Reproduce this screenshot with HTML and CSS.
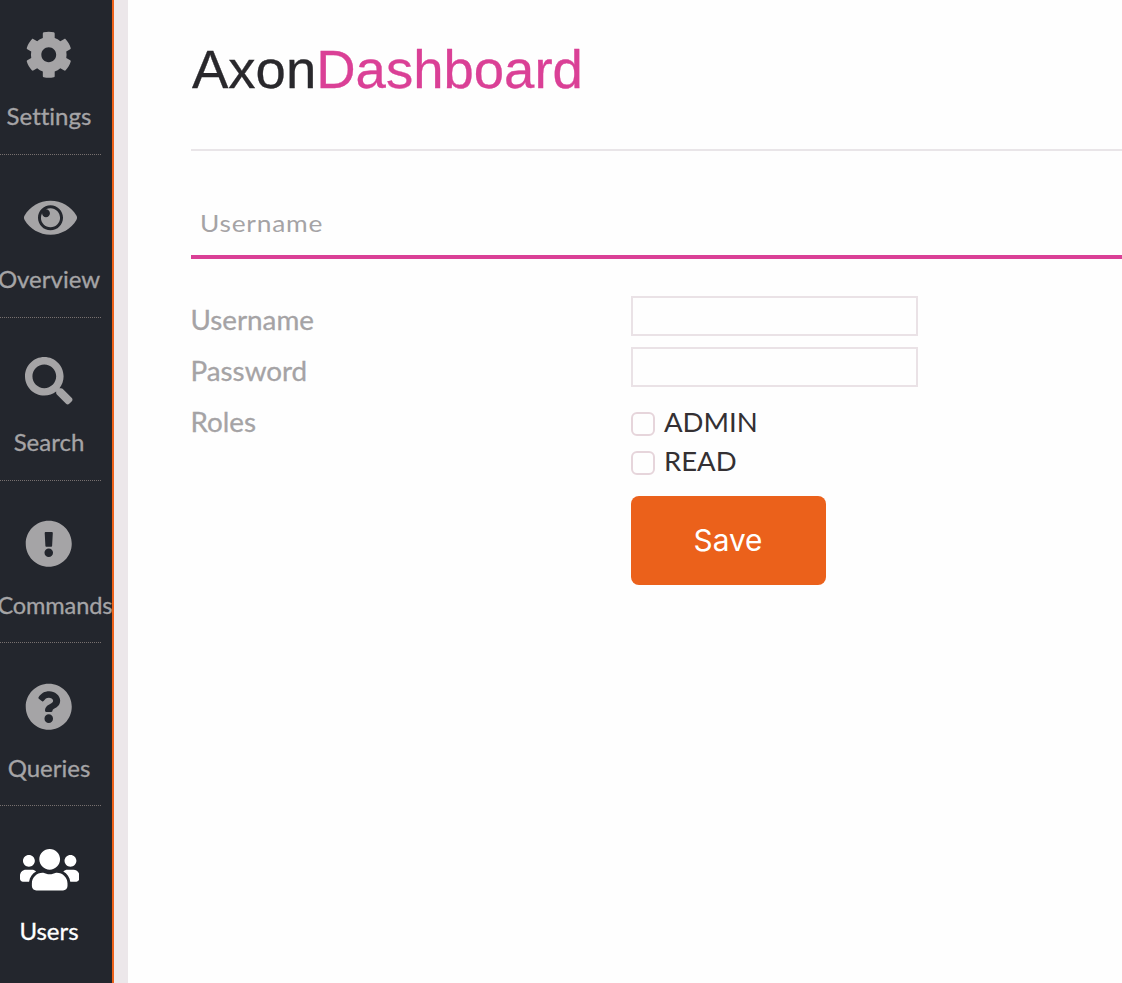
FILE: index.html
```html
<!DOCTYPE html>
<html lang="en">
<head>
<meta charset="utf-8">
<title>AxonDashboard</title>
<link rel="stylesheet" href="styles.css">
</head>
<body>
<div class="app">
  <nav class="sidebar">
    <a class="item">
      <svg class="icon" viewBox="0 0 512 512"><path d="M487.4 315.7l-42.6-24.6c4.3-23.2 4.3-47 0-70.2l42.6-24.6c4.9-2.8 7.1-8.6 5.5-14-11.1-35.6-30-67.8-54.7-94.6-3.8-4.1-10-5.1-14.8-2.3L380.8 110c-17.9-15.4-38.5-27.3-60.8-35.1V25.8c0-5.6-3.9-10.5-9.4-11.7-36.7-8.2-74.3-7.8-109.2 0-5.5 1.2-9.4 6.1-9.4 11.7V75c-22.2 7.9-42.8 19.8-60.8 35.1L88.7 85.5c-4.9-2.8-11-1.9-14.8 2.3-24.7 26.7-43.6 58.9-54.7 94.6-1.7 5.4.6 11.2 5.5 14L67.3 221c-4.3 23.2-4.3 47 0 70.2l-42.6 24.6c-4.9 2.8-7.1 8.6-5.5 14 11.1 35.6 30 67.8 54.7 94.6 3.8 4.1 10 5.1 14.8 2.3l42.6-24.6c17.9 15.4 38.5 27.3 60.8 35.1v49.2c0 5.6 3.9 10.5 9.4 11.7 36.7 8.2 74.3 7.8 109.2 0 5.5-1.2 9.4-6.1 9.4-11.7v-49.2c22.2-7.9 42.8-19.8 60.8-35.1l42.6 24.6c4.9 2.8 11 1.9 14.8-2.3 24.7-26.7 43.6-58.9 54.7-94.6 1.5-5.5-.7-11.3-5.6-14.1zM256 336c-44.1 0-80-35.9-80-80s35.9-80 80-80 80 35.9 80 80-35.9 80-80 80z"/></svg>
      <span class="label">Settings</span>
    </a>
    <a class="item">
      <svg class="icon" viewBox="0 0 576 512"><path d="M569.354 231.631C512.969 135.949 407.81 72 288 72 168.14 72 63.004 135.994 6.646 231.631a47.999 47.999 0 0 0 0 48.739C63.031 376.051 168.19 440 288 440c119.86 0 224.996-63.994 281.354-159.631a47.997 47.997 0 0 0 0-48.738zM288 392c-75.162 0-136-60.827-136-136 0-75.162 60.826-136 136-136 75.162 0 136 60.826 136 136 0 75.162-60.826 136-136 136zm104-136c0 57.438-46.562 104-104 104s-104-46.562-104-104c0-17.708 4.431-34.379 12.236-48.973l-.001.032c0 23.651 19.173 42.823 42.824 42.823s42.824-19.173 42.824-42.823c0-23.651-19.173-42.824-42.824-42.824l-.032.001C253.621 156.431 270.292 152 288 152c57.438 0 104 46.562 104 104z"/></svg>
      <span class="label">Overview</span>
    </a>
    <a class="item">
      <svg class="icon" viewBox="0 0 512 512"><path d="M505 442.7L405.3 343c-4.5-4.5-10.6-7-17-7H372c27.6-35.3 44-79.7 44-128C416 93.1 322.9 0 208 0S0 93.1 0 208s93.1 208 208 208c48.3 0 92.7-16.4 128-44v16.300c0 6.400 2.500 12.500 7 17l99.700 99.700c9.400 9.400 24.600 9.400 33.900 0l28.300-28.300c9.400-9.400 9.400-24.600.100-34zM208 336c-70.700 0-128-57.200-128-128 0-70.700 57.200-128 128-128 70.700 0 128 57.200 128 128 0 70.700-57.200 128-128 128z"/></svg>
      <span class="label">Search</span>
    </a>
    <a class="item">
      <svg class="icon" viewBox="0 0 512 512"><path d="M504 256c0 136.997-111.043 248-248 248S8 392.997 8 256C8 119.083 119.043 8 256 8s248 111.083 248 248zm-248 50c-25.405 0-46 20.595-46 46s20.595 46 46 46 46-20.595 46-46-20.595-46-46-46zm-43.673-165.346l7.418 136c.347 6.364 5.609 11.346 11.982 11.346h48.546c6.373 0 11.635-4.982 11.982-11.346l7.418-136c.375-6.874-5.098-12.654-11.982-12.654h-63.383c-6.884 0-12.356 5.780-11.981 12.654z"/></svg>
      <span class="label">Commands</span>
    </a>
    <a class="item">
      <svg class="icon" viewBox="0 0 512 512"><path d="M504 256c0 136.997-111.043 248-248 248S8 392.997 8 256C8 119.083 119.043 8 256 8s248 111.083 248 248zM262.655 90c-54.497 0-89.255 22.957-116.549 63.758-3.536 5.286-2.353 12.415 2.715 16.258l34.699 26.310c5.205 3.947 12.621 3.008 16.665-2.122 17.864-22.658 30.113-35.797 57.303-35.797 20.429 0 45.698 13.148 45.698 32.958 0 14.976-12.363 22.667-32.534 33.976C247.128 238.528 216 254.941 216 296v4c0 6.627 5.373 12 12 12h56c6.627 0 12-5.373 12-12v-1.333c0-28.462 83.186-29.647 83.186-106.667 0-58.002-60.165-102-116.531-102zM256 338c-25.365 0-46 20.635-46 46 0 25.364 20.635 46 46 46s46-20.636 46-46c0-25.365-20.635-46-46-46z"/></svg>
      <span class="label">Queries</span>
    </a>
    <a class="item active">
      <svg class="icon" viewBox="0 0 640 512"><path d="M96 224c35.300 0 64-28.700 64-64s-28.700-64-64-64-64 28.700-64 64 28.700 64 64 64zm448 0c35.300 0 64-28.700 64-64s-28.700-64-64-64-64 28.700-64 64 28.700 64 64 64zm32 32h-64c-17.600 0-33.500 7.100-45.100 18.600 40.300 22.100 68.900 62 75.100 109.400h66c17.700 0 32-14.300 32-32v-32c0-35.300-28.700-64-64-64zm-256 0c61.900 0 112-50.100 112-112S381.900 32 320 32 208 82.100 208 144s50.100 112 112 112zm76.800 32h-8.300c-20.800 10-43.900 16-68.500 16s-47.600-6-68.500-16h-8.300C179.600 288 128 339.600 128 403.200V432c0 26.500 21.500 48 48 48h288c26.500 0 48-21.500 48-48v-28.800c0-63.600-51.600-115.200-115.200-115.200zm-223.700-13.400C161.500 263.100 145.600 256 128 256H64c-35.300 0-64 28.700-64 64v32c0 17.700 14.300 32 32 32h65.900c6.300-47.400 34.900-87.300 75.200-109.400z"/></svg>
      <span class="label">Users</span>
    </a>
  </nav>
  <main class="content">
    <h1 class="brand">Axon<span class="accent">Dashboard</span></h1>
    <div class="tab"><span class="tab-text">Username</span></div>
    <form class="form">
      <label class="name" for="user">Username</label>
      <input class="field" id="user" type="text">
      <label class="name" for="pass">Password</label>
      <input class="field" id="pass" type="password">
      <span class="name">Roles</span>
      <div class="roles">
        <label class="role"><input class="box" type="checkbox">ADMIN</label>
        <label class="role"><input class="box" type="checkbox">READ</label>
      </div>
      <button class="save" type="button">Save</button>
    </form>
  </main>
</div>
</body>
</html>
```
FILE: styles.css
```css
* { box-sizing: border-box; }
body {
  margin: 0;
  background: #fefefe;
  font-family: Lato, sans-serif;
  font-variant-ligatures: none;
}
.app { display: flex; height: 983px; overflow: hidden; }
.sidebar {
  flex: none;
  width: 114px;
  background: #23262d;
  border-right: 2px solid #eb611b;
}
.item {
  display: flex;
  flex-direction: column;
  width: 104px;
  height: 162.8px;
  margin-left: -3px;
  padding-top: 39.4px;
  border-bottom: 1px dotted #77706f;
  color: #a5a4a6;
}
.item:first-child { height: 155px; padding-top: 31.4px; }
.item.active { color: #fff; border-bottom: 0; }
.icon {
  display: block;
  height: 47.5px;
  margin-left: 0.4px;
  align-self: center;
  fill: currentColor;
}
.item:nth-child(2) .icon { width: 53px; margin-left: 2px; }
.label {
  align-self: center;
  margin-top: 22.6px;
  font-size: 24px;
  line-height: 30px;
  white-space: nowrap;
  -webkit-text-stroke: 0.3px currentColor;
}
.item:nth-child(4) .label {
  align-self: flex-start;
  margin-left: 0.5px;
  font-size: 23.6px;
  letter-spacing: -0.15px;
}
.content {
  flex: 1;
  border-left: 14px solid #ece7ea;
  padding-left: 62.5px;
}
.brand {
  margin: 0;
  height: 151px;
  padding: 38px 0 0 1.5px;
  border-bottom: 2px solid #e9e5e8;
  font: 400 54.5px/64px "Liberation Sans", sans-serif;
  color: #29282c;
  -webkit-text-stroke: 0.3px currentColor;
}
.accent { color: #da4096; }
.tab {
  height: 108px;
  padding: 57px 0 0 9px;
  border-bottom: 4px solid #da4096;
  font-size: 23.5px;
  line-height: 30px;
  letter-spacing: 0.7px;
  color: #a5a3a5;
}
.tab-text {
  display: inline-block;
  transform: scaleX(1.12);
  transform-origin: left;
}
.form {
  display: grid;
  grid-template-columns: 440px 1fr;
  grid-template-rows: 51px 51px 98px 89px;
  justify-items: start;
  padding-top: 37px;
}
.name {
  padding-top: 7px;
  font-size: 27.8px;
  line-height: 34px;
  color: #a5a3a5;
  -webkit-text-stroke: 0.3px currentColor;
}
.field {
  width: 287px;
  height: 40px;
  border: 2px solid #eae2e6;
  background: #fefefe;
  outline: 0;
}
.roles { padding-top: 4px; }
.role {
  display: flex;
  align-items: center;
  height: 39px;
  font-size: 27.5px;
  line-height: 34px;
  color: #343033;
}
.box {
  appearance: none;
  width: 24px;
  height: 24px;
  margin: 4px 9.5px 0 0;
  border: 2px solid #e6d5db;
  border-radius: 6px;
  background: #fefefe;
}
.save {
  grid-column: 2;
  width: 195px;
  height: 89px;
  padding: 0 6px 2px;
  border: 0;
  border-radius: 8px;
  background: #eb611b;
  color: #fff;
  font: 400 29.8px Inter, sans-serif;
}
```
